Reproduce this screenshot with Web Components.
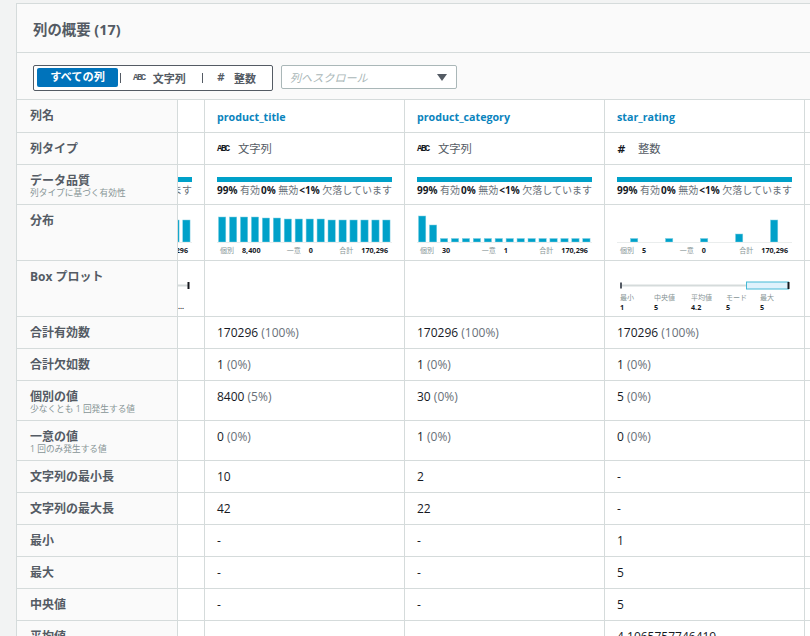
<!DOCTYPE html>
<html lang="ja">
<head>
<meta charset="utf-8">
<title>列の概要</title>
<style>
    html, body { margin: 0; height: 100%; overflow: hidden; background: #f2f3f3; }
    body {
        padding: 3px 0 0 16px;
        box-sizing: border-box;
        font-family: "Open Sans", "Noto Sans CJK JP", sans-serif;
        font-size: 12px;
        color: #16191f;
    }
</style>
</head>
<body>
<col-summary heading="列の概要 (17)">
    <filter-bar slot="tools"></filter-bar>

    <sum-row label="列名" height="33">
        <sum-cell partial></sum-cell>
        <sum-cell><a-link>product_title</a-link></sum-cell>
        <sum-cell><a-link>product_category</a-link></sum-cell>
        <sum-cell><a-link>star_rating</a-link></sum-cell>
    </sum-row>
    <sum-row label="列タイプ" height="32">
        <sum-cell partial></sum-cell>
        <sum-cell><type-tag kind="abc">文字列</type-tag></sum-cell>
        <sum-cell><type-tag kind="abc">文字列</type-tag></sum-cell>
        <sum-cell><type-tag kind="int">整数</type-tag></sum-cell>
    </sum-row>
    <sum-row label="データ品質" sub="列タイプに基づく有効性" height="40">
        <sum-cell partial><quality-bar></quality-bar></sum-cell>
        <sum-cell><quality-bar></quality-bar></sum-cell>
        <sum-cell><quality-bar></quality-bar></sum-cell>
        <sum-cell><quality-bar></quality-bar></sum-cell>
    </sum-row>
    <sum-row label="分布" height="56">
        <sum-cell partial><dist-chart bars="26,25,25,25,24,24,23,23,23,23,22,22,22,22,22,22" total="170,296" distinct="8,400" unique="0"></dist-chart></sum-cell>
        <sum-cell><dist-chart bars="25,25,25,25,24,24,23,23,23,23,22,22,22,22,22,22" distinct="8,400" unique="0" total="170,296"></dist-chart></sum-cell>
        <sum-cell><dist-chart bars="26,17,3.5,3.5,3.5,3.5,3.5,3.5,3.5,3.5,3.5,3.5,3.5,3.5,3.5,3.5" distinct="30" unique="1" total="170,296"></dist-chart></sum-cell>
        <sum-cell><dist-chart sparse bars="3.5,3.5,3.5,8,22" distinct="5" unique="0" total="170,296"></dist-chart></sum-cell>
    </sum-row>
    <sum-row label="Box プロット" height="56">
        <sum-cell partial><box-plot clipped></box-plot></sum-cell>
        <sum-cell></sum-cell>
        <sum-cell></sum-cell>
        <sum-cell><box-plot></box-plot></sum-cell>
    </sum-row>
    <sum-row label="合計有効数" height="32">
        <sum-cell partial></sum-cell>
        <sum-cell>170296 <small-pct>(100%)</small-pct></sum-cell>
        <sum-cell>170296 <small-pct>(100%)</small-pct></sum-cell>
        <sum-cell>170296 <small-pct>(100%)</small-pct></sum-cell>
    </sum-row>
    <sum-row label="合計欠如数" height="32">
        <sum-cell partial></sum-cell>
        <sum-cell>1 <small-pct>(0%)</small-pct></sum-cell>
        <sum-cell>1 <small-pct>(0%)</small-pct></sum-cell>
        <sum-cell>1 <small-pct>(0%)</small-pct></sum-cell>
    </sum-row>
    <sum-row label="個別の値" sub="少なくとも 1 回発生する値" height="40">
        <sum-cell partial></sum-cell>
        <sum-cell>8400 <small-pct>(5%)</small-pct></sum-cell>
        <sum-cell>30 <small-pct>(0%)</small-pct></sum-cell>
        <sum-cell>5 <small-pct>(0%)</small-pct></sum-cell>
    </sum-row>
    <sum-row label="一意の値" sub="1 回のみ発生する値" height="40">
        <sum-cell partial></sum-cell>
        <sum-cell>0 <small-pct>(0%)</small-pct></sum-cell>
        <sum-cell>1 <small-pct>(0%)</small-pct></sum-cell>
        <sum-cell>0 <small-pct>(0%)</small-pct></sum-cell>
    </sum-row>
    <sum-row label="文字列の最小長" height="32">
        <sum-cell partial></sum-cell>
        <sum-cell>10</sum-cell>
        <sum-cell>2</sum-cell>
        <sum-cell>-</sum-cell>
    </sum-row>
    <sum-row label="文字列の最大長" height="32">
        <sum-cell partial></sum-cell>
        <sum-cell>42</sum-cell>
        <sum-cell>22</sum-cell>
        <sum-cell>-</sum-cell>
    </sum-row>
    <sum-row label="最小" height="32">
        <sum-cell partial></sum-cell>
        <sum-cell>-</sum-cell>
        <sum-cell>-</sum-cell>
        <sum-cell>1</sum-cell>
    </sum-row>
    <sum-row label="最大" height="32">
        <sum-cell partial></sum-cell>
        <sum-cell>-</sum-cell>
        <sum-cell>-</sum-cell>
        <sum-cell>5</sum-cell>
    </sum-row>
    <sum-row label="中央値" height="32">
        <sum-cell partial></sum-cell>
        <sum-cell>-</sum-cell>
        <sum-cell>-</sum-cell>
        <sum-cell>5</sum-cell>
    </sum-row>
    <sum-row label="平均値" height="32">
        <sum-cell partial></sum-cell>
        <sum-cell>-</sum-cell>
        <sum-cell>-</sum-cell>
        <sum-cell>4.1065757746419</sum-cell>
    </sum-row>
</col-summary>

<script>
class ColSummary extends HTMLElement {
    constructor() {
        super();
        this.attachShadow({ mode: "open" });
        this.shadowRoot.innerHTML = `
            <style>
                :host {
                    display: block;
                    background: #fafafa;
                    border: 1px solid #d5dbdb;
                    border-right: 0;
                    border-bottom: 0;
                }
                .title {
                    height: 49px;
                    box-sizing: border-box;
                    padding: 0 16px;
                    display: flex;
                    align-items: center;
                    font-size: 14.4px;
                    font-weight: 700;
                    color: #545b64;
                    border-bottom: 1px solid #d5dbdb;
                }
                .tools {
                    height: 47px;
                    box-sizing: border-box;
                    padding: 12px 16px 0;
                    border-bottom: 1px solid #d5dbdb;
                }
            </style>
            <div class="title"></div>
            <div class="tools"><slot name="tools"></slot></div>
            <slot></slot>
        `;
    }

    connectedCallback() {
        this.shadowRoot.querySelector(".title").textContent = this.getAttribute("heading") || "";
    }
}

class FilterBar extends HTMLElement {
    constructor() {
        super();
        this.attachShadow({ mode: "open" });
        this.shadowRoot.innerHTML = `
            <style>
                :host { display: flex; gap: 8px; align-items: flex-start; }
                .seg {
                    width: 240px;
                    height: 26px;
                    box-sizing: border-box;
                    border: 1px solid #545b64;
                    border-radius: 2px;
                    background: #fff;
                    padding: 2px 3px;
                    display: flex;
                    align-items: flex-start;
                    font-size: 11px;
                    font-weight: 600;
                    color: #545b64;
                }
                .on {
                    width: 81px;
                    height: 19px;
                    line-height: 18px;
                    text-align: center;
                    background: #0073bb;
                    color: #fff;
                    border-radius: 2px;
                    font-size: 11.2px;
                    font-weight: 700;
                }
                .sep { width: 1px; height: 10px; background: #545b64; margin-top: 5px; }
                .opt { display: flex; align-items: center; height: 19px; gap: 8px; }
                .abc { font: 700 9px "Liberation Mono", monospace; letter-spacing: -1.5px; }
                .hash { font: 700 10px "DejaVu Sans", sans-serif; }
                .select {
                    width: 176px;
                    height: 24px;
                    box-sizing: border-box;
                    border: 1px solid #aab7b8;
                    border-radius: 2px;
                    background: #fff;
                    padding: 0 9px 0 8px;
                    display: flex;
                    align-items: center;
                    justify-content: space-between;
                    font-size: 11.1px;
                    font-style: italic;
                    color: #aab7b8;
                }
            </style>
            <div class="seg">
                <span class="on">すべての列</span>
                <span class="sep" style="margin-left:2px"></span>
                <span class="opt" style="margin-left:12px"><span class="abc">ABC</span><span>文字列</span></span>
                <span class="sep" style="margin-left:16px"></span>
                <span class="opt" style="margin-left:14px;gap:9px"><span class="hash">#</span><span>整数</span></span>
            </div>
            <div class="select">
                <span>列へスクロール</span>
                <svg width="10" height="7" viewBox="0 0 10 7"><path d="M0 0h10L5 7z" fill="#545b64"/></svg>
            </div>
        `;
    }
}

class SumRow extends HTMLElement {
    constructor() {
        super();
        this.attachShadow({ mode: "open" });
        this.shadowRoot.innerHTML = `
            <style>
                :host {
                    display: flex;
                    box-sizing: border-box;
                    border-bottom: 1px solid #d5dbdb;
                    background: #fff;
                }
                .head {
                    width: 161px;
                    flex: none;
                    box-sizing: border-box;
                    padding: 8px 0 0 13px;
                    background: #fafafa;
                    border-right: 1px solid #d5dbdb;
                }
                :host([sub]) .head { padding-top: 7.5px; }
                .label { font-size: 12px; line-height: 16px; font-weight: 700; color: #545b64; }
                .sub { font-size: 8.7px; line-height: 9px; color: #879596; }
            </style>
            <div class="head"><div class="label"></div><div class="sub"></div></div>
            <slot></slot>
        `;
    }

    connectedCallback() {
        this.style.height = this.getAttribute("height") + "px";
        this.shadowRoot.querySelector(".label").textContent = this.getAttribute("label");
        this.shadowRoot.querySelector(".sub").textContent = this.getAttribute("sub") || "";
    }
}

class SumCell extends HTMLElement {
    constructor() {
        super();
        this.attachShadow({ mode: "open" });
        this.shadowRoot.innerHTML = `
            <style>
                :host {
                    display: block;
                    flex: none;
                    width: 200px;
                    box-sizing: border-box;
                    border-right: 1px solid #d5dbdb;
                    overflow: hidden;
                    white-space: nowrap;
                    color: #16191f;
                    font-size: 12px;
                    line-height: 16px;
                }
                .in { padding: 8px 12px 0; width: 199px; box-sizing: border-box; }
                :host([partial]) { width: 27px; }
                :host([partial]) .in { margin-left: -173px; }
            </style>
            <div class="in"><slot></slot></div>
        `;
    }
}

class ALink extends HTMLElement {
    constructor() {
        super();
        this.attachShadow({ mode: "open" });
        this.shadowRoot.innerHTML = `
            <style>:host { display: block; padding-top: 1px; color: #0a84bd; font-size: 10.7px; font-weight: 700; }</style>
            <slot></slot>
        `;
    }
}

class SmallPct extends HTMLElement {
    constructor() {
        super();
        this.attachShadow({ mode: "open" });
        this.shadowRoot.innerHTML = `<style>:host { color: #687078; }</style><slot></slot>`;
    }
}

class TypeTag extends HTMLElement {
    constructor() {
        super();
        this.attachShadow({ mode: "open" });
        this.shadowRoot.innerHTML = `
            <style>
                :host { display: flex; align-items: center; height: 16px; font-size: 11.3px; color: #545b64; }
                .icon { width: 21px; color: #16191f; }
                .abc { font: 700 9px "Liberation Mono", monospace; letter-spacing: -1.5px; }
                .hash { font: 700 10.5px "DejaVu Sans", sans-serif; }
            </style>
            <span class="icon"></span><slot></slot>
        `;
    }

    connectedCallback() {
        const icon = this.shadowRoot.querySelector(".icon");
        if (this.getAttribute("kind") === "abc") {
            icon.classList.add("abc");
            icon.textContent = "ABC";
        } else {
            icon.classList.add("hash");
            icon.textContent = "#";
        }
    }
}

class QualityBar extends HTMLElement {
    constructor() {
        super();
        this.attachShadow({ mode: "open" });
        this.shadowRoot.innerHTML = `
            <style>
                :host { display: block; margin-top: 4px; }
                .bar { height: 5px; background: #00a1c9; }
                .txt {
                    margin-top: 1px;
                    display: flex;
                    justify-content: space-between;
                    font-size: 10px;
                    line-height: 14px;
                    color: #687078;
                }
                b { color: #16191f; font-weight: 700; }
            </style>
            <div class="bar"></div>
            <div class="txt">
                <span><b>99%</b> 有効</span><span><b>0%</b> 無効</span><span><b>&lt;1%</b> 欠落しています</span>
            </div>
        `;
    }
}

class DistChart extends HTMLElement {
    constructor() {
        super();
        this.attachShadow({ mode: "open" });
    }

    connectedCallback() {
        const bars = this.getAttribute("bars").split(",").map(Number);
        const sparse = this.hasAttribute("sparse");
        const rects = bars.map((h, i) => {
            const x = sparse ? 13.5 + i * 35 : 1.5 + i * 10.95;
            return `<rect x="${x}" y="${28 - h}" width="7.3" height="${h}" fill="#00a1c9" stroke="#7fd0e4" stroke-width="0.5"/>`;
        }).join("");

        this.shadowRoot.innerHTML = `
            <style>
                :host { display: block; padding-top: 1px; }
                svg { display: block; }
                .lab {
                    display: flex;
                    justify-content: space-between;
                    padding: 0 4px 0 3px;
                    font-size: 7px;
                    line-height: 12px;
                    color: #879596;
                    margin-top: 1px;
                }
                b { color: #16191f; font-size: 7.2px; font-weight: 700; margin-left: 8px; }
            </style>
            <svg width="175" height="29" viewBox="0 0 175 29">
                ${rects}
                <rect x="0" y="28" width="175" height="1" fill="#eaeded"/>
            </svg>
            <div class="lab">
                <span>個別<b>${this.getAttribute("distinct")}</b></span>
                <span>一意<b>${this.getAttribute("unique")}</b></span>
                <span>合計<b>${this.getAttribute("total")}</b></span>
            </div>
        `;
    }
}

class BoxPlot extends HTMLElement {
    constructor() {
        super();
        this.attachShadow({ mode: "open" });
    }

    connectedCallback() {
        const vals = [["最小", "1"], ["中央値", "5"], ["平均値", "4.2"], ["モード", "5"], ["最大", "5"]];
        const clipped = this.hasAttribute("clipped");
        // the clipped column only shows the end of its plot and a truncated value
        const items = clipped
            ? `<span class="more">...</span>`
            : vals.map(v => `<div>${v[0]}<b>${v[1]}</b></div>`).join("");

        this.shadowRoot.innerHTML = `
            <style>
                :host { display: block; margin-top: 12px; }
                svg { display: block; margin-left: 3px; }
                .vals {
                    display: grid;
                    grid-template-columns: 34px 37px 35px 34px 20px;
                    margin: 3px 0 0 3px;
                    font-size: 7px;
                    line-height: 9px;
                    color: #879596;
                }
                b { display: block; margin-top: 1px; color: #16191f; font-size: 7.2px; font-weight: 700; }
                .more { display: block; margin: 9px 0 0 158px; font-weight: 700; color: #16191f; line-height: 9px; }
            </style>
            <svg width="170" height="9" viewBox="0 0 170 9">
                <rect x="0" y="1.5" width="2" height="6" fill="#545b64"/>
                <rect x="2" y="3.5" width="${clipped ? 166 : 125}" height="2" fill="#d5dbdb"/>
                ${clipped ? "" : `<rect x="126.5" y="1" width="42" height="7" fill="#dff2fc" stroke="#44b9d6"/>`}
                <rect x="167.5" y="1" width="2" height="7" fill="#16191f"/>
            </svg>
            <div class="vals">${items}</div>
        `;
    }
}

customElements.define("col-summary", ColSummary);
customElements.define("filter-bar", FilterBar);
customElements.define("sum-row", SumRow);
customElements.define("sum-cell", SumCell);
customElements.define("a-link", ALink);
customElements.define("small-pct", SmallPct);
customElements.define("type-tag", TypeTag);
customElements.define("quality-bar", QualityBar);
customElements.define("dist-chart", DistChart);
customElements.define("box-plot", BoxPlot);
</script>
</body>
</html>
